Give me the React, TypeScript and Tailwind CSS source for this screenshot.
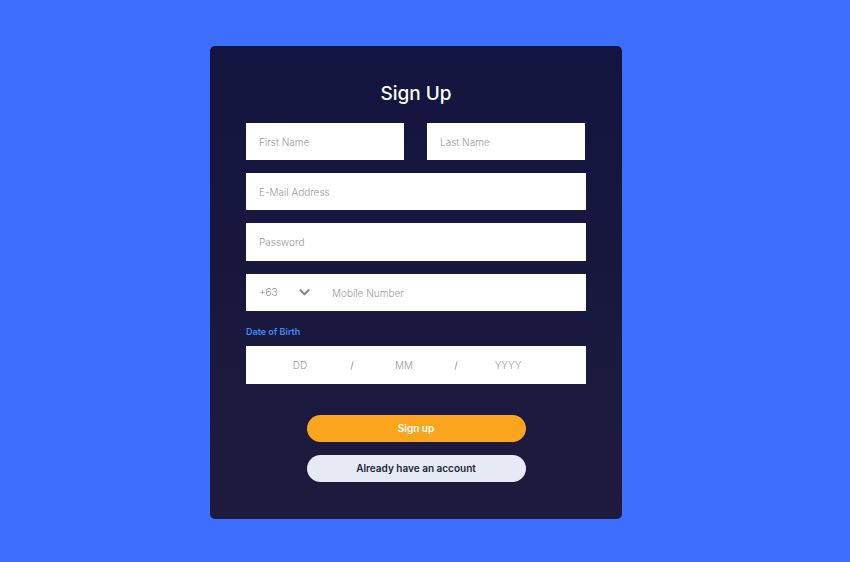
export default function App() {
  const font = { fontFamily: "Inter, 'Noto Sans', sans-serif" };
  return (
    <div className="flex h-[562px] w-full justify-center bg-[#3e6efd] pt-[46px] pr-[18px]" style={font}>
      <div className="flex h-[473px] w-[412px] flex-col rounded-[5px] bg-gradient-to-b from-[#12153f] to-[#1e1a3d] px-[36px] pt-[33px]">
        <h1 className="text-center text-[19px] leading-[30px] font-medium text-white">Sign Up</h1>

        <div className="mt-[14px] flex flex-col gap-[13px]">
          <div className="flex gap-[23px]">
            <input className="h-[37px] w-[158px] bg-white px-[13px] text-[10px] font-light text-[#888] outline-none placeholder:text-[#9a9a9a]" placeholder="First Name" />
            <input className="h-[37px] w-[158px] bg-white px-[13px] text-[10px] font-light text-[#888] outline-none placeholder:text-[#9a9a9a]" placeholder="Last Name" />
          </div>
          <input className="h-[37px] w-full bg-white px-[13px] text-[10px] font-light outline-none placeholder:text-[#9a9a9a]" placeholder="E-Mail Address" />
          <input className="h-[38px] w-full bg-white px-[13px] text-[10px] font-light outline-none placeholder:text-[#9a9a9a]" placeholder="Password" />
          <div className="flex h-[37px] w-full items-center bg-white pl-[13px]">
            <span className="w-[40px] text-[10px] font-light text-[#8a8a8a]">+63</span>
            <svg width="11" height="7" viewBox="0 0 12 8" className="text-[#8c8c8c]">
              <path d="M1.5 1.5 L6 6 L10.5 1.5" fill="none" stroke="currentColor" strokeWidth="2.6" strokeLinecap="round" strokeLinejoin="round" />
            </svg>
            <input className="ml-[22px] h-full flex-1 text-[10px] font-light outline-none placeholder:text-[#9a9a9a]" placeholder="Mobile Number" />
          </div>
        </div>

        <label className="mt-[15px] text-[9px] leading-[12px] font-semibold text-[#3d8cf5]">Date of Birth</label>
        <div className="mt-[8px] flex h-[38px] w-full items-center bg-white pl-[28px] text-[10px] font-light text-[#9a9a9a]">
          <span className="w-[52px] text-center">DD</span>
          <span className="w-[52px] text-center text-[#777]">/</span>
          <span className="w-[52px] text-center">MM</span>
          <span className="w-[52px] text-center text-[#777]">/</span>
          <span className="w-[52px] text-center">YYYY</span>
        </div>

        <div className="mt-[31px] flex flex-col items-center gap-[13px]">
          <button className="h-[27px] w-[219px] rounded-full bg-[#fba51f] text-[10px] font-semibold text-white">
            Sign up
          </button>
          <button className="h-[27px] w-[219px] rounded-full bg-[#e5eaf4] text-[10px] font-semibold text-[#23233a]">
            Already have an account
          </button>
        </div>
      </div>
    </div>
  );
}
